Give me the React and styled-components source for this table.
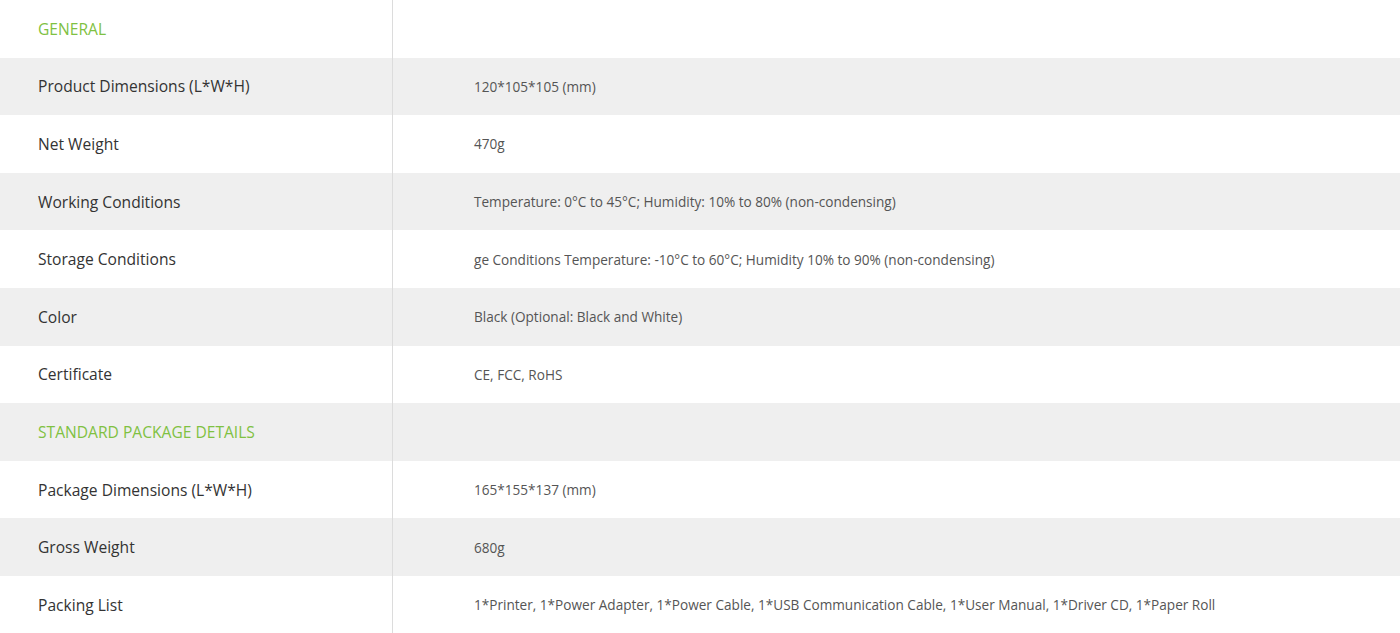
import styled, { createGlobalStyle } from "styled-components";

const GlobalStyle = createGlobalStyle`
  html, body {
    margin: 0;
    padding: 0;
    background: #ffffff;
  }
  body {
    font-family: "Open Sans", "Noto Sans", Arial, sans-serif;
  }
`;

const ROWS = [
  { head: true, label: "GENERAL" },
  { label: "Product Dimensions (L*W*H)", value: "120*105*105 (mm)" },
  { label: "Net Weight", value: "470g" },
  {
    label: "Working Conditions",
    value: "Temperature: 0°C to 45°C; Humidity: 10% to 80% (non-condensing)",
  },
  {
    label: "Storage Conditions",
    value:
      "ge Conditions Temperature: -10°C to 60°C; Humidity 10% to 90% (non-condensing)",
  },
  { label: "Color", value: "Black (Optional: Black and White)" },
  { label: "Certificate", value: "CE, FCC, RoHS" },
  { head: true, label: "STANDARD PACKAGE DETAILS" },
  { label: "Package Dimensions (L*W*H)", value: "165*155*137 (mm)" },
  { label: "Gross Weight", value: "680g" },
  {
    label: "Packing List",
    value:
      "1*Printer, 1*Power Adapter, 1*Power Cable, 1*USB Communication Cable, 1*User Manual, 1*Driver CD, 1*Paper Roll",
  },
];

export default function App() {
  return (
    <>
      <GlobalStyle />
      <SpecTable>
        {ROWS.map((row, i) => (
          <Row key={i} $shaded={i % 2 === 1}>
            <LabelCell $head={row.head}>{row.label}</LabelCell>
            <ValueCell>{row.value}</ValueCell>
          </Row>
        ))}
      </SpecTable>
    </>
  );
}

// STYLES
const SpecTable = styled.div`
  width: 1400px;
  display: flex;
  flex-direction: column;
`;

const Row = styled.div`
  display: grid;
  grid-template-columns: 393px 1fr;
  height: 57.6px;
  background-color: ${(p) => (p.$shaded ? "#efefef" : "#ffffff")};
`;

const LabelCell = styled.div`
  display: flex;
  align-items: center;
  padding-left: 38px;
  border-right: 1px solid #dcdcdc;
  font-size: 15.6px;
  letter-spacing: 0;
  color: ${(p) => (p.$head ? "#7fc142" : "#333333")};
`;

const ValueCell = styled.div`
  display: flex;
  align-items: center;
  padding-left: 81px;
  font-size: 13.6px;
  letter-spacing: 0;
  color: #555555;
`;
